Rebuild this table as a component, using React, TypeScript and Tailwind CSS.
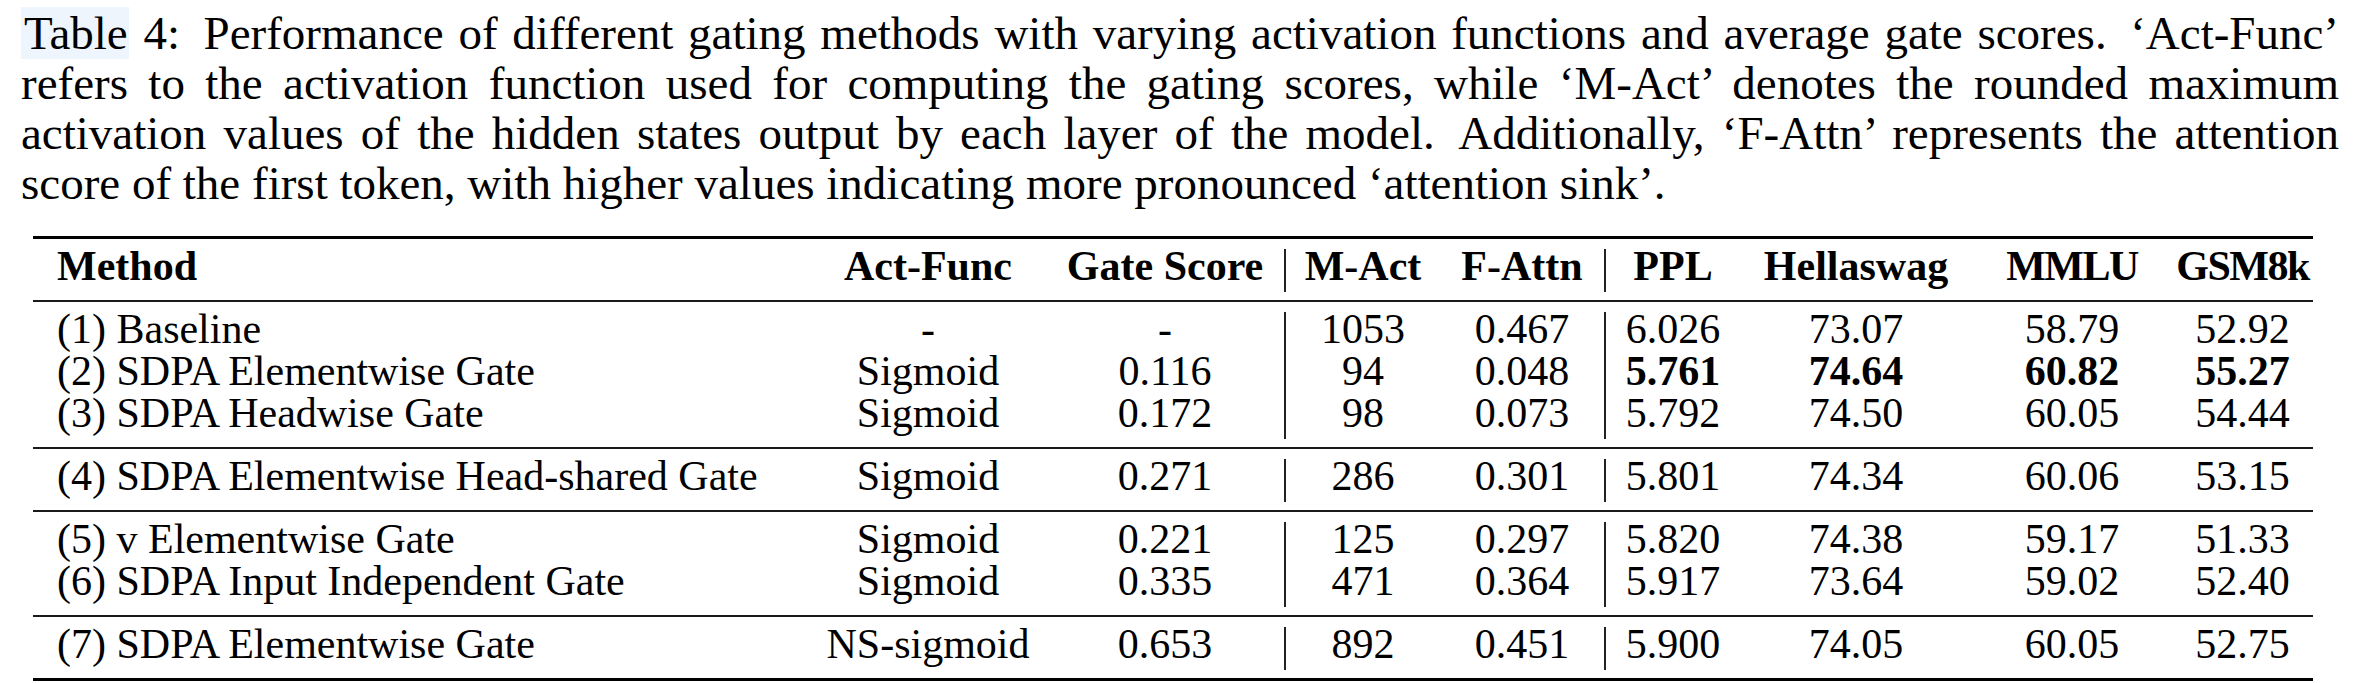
import React from "react";

type Row = {
  m: string;
  a: string;
  g: string;
  ma: string;
  fa: string;
  ppl: string;
  h: string;
  mm: string;
  gsm: string;
  bold?: boolean;
};

const groups: Row[][] = [
  [
    { m: "(1) Baseline", a: "-", g: "-", ma: "1053", fa: "0.467", ppl: "6.026", h: "73.07", mm: "58.79", gsm: "52.92" },
    { m: "(2) SDPA Elementwise Gate", a: "Sigmoid", g: "0.116", ma: "94", fa: "0.048", ppl: "5.761", h: "74.64", mm: "60.82", gsm: "55.27", bold: true },
    { m: "(3) SDPA Headwise Gate", a: "Sigmoid", g: "0.172", ma: "98", fa: "0.073", ppl: "5.792", h: "74.50", mm: "60.05", gsm: "54.44" },
  ],
  [
    { m: "(4) SDPA Elementwise Head-shared Gate", a: "Sigmoid", g: "0.271", ma: "286", fa: "0.301", ppl: "5.801", h: "74.34", mm: "60.06", gsm: "53.15" },
  ],
  [
    { m: "(5) v Elementwise Gate", a: "Sigmoid", g: "0.221", ma: "125", fa: "0.297", ppl: "5.820", h: "74.38", mm: "59.17", gsm: "51.33" },
    { m: "(6) SDPA Input Independent Gate", a: "Sigmoid", g: "0.335", ma: "471", fa: "0.364", ppl: "5.917", h: "73.64", mm: "59.02", gsm: "52.40" },
  ],
  [
    { m: "(7) SDPA Elementwise Gate", a: "NS-sigmoid", g: "0.653", ma: "892", fa: "0.451", ppl: "5.900", h: "74.05", mm: "60.05", gsm: "52.75" },
  ],
];

const gridCols =
  "grid grid-cols-[777px_236px_238px_2px_154px_164px_2px_134px_232px_200px_141px]";

function Cell({ lines, left, boldSet, tight }: { lines: string[]; left?: boolean; boldSet?: boolean[]; tight?: boolean }) {
  return (
    <div className={`flex flex-col pt-[6px] pb-[13px] ${left ? "items-start pl-[24px]" : "items-center"}`}>
      {lines.map((l, i) => (
        <div
          key={i}
          className={`h-[42px] leading-[42px] whitespace-nowrap ${boldSet && boldSet[i] ? "font-bold" : ""} ${tight ? "tracking-[-1.5px]" : ""}`}
        >
          {l}
        </div>
      ))}
    </div>
  );
}

function Bar() {
  return <div className="mt-[10px] mb-[8px] w-[2px] bg-[#222]" />;
}

function Group({ rows }: { rows: Row[] }) {
  const b = rows.map((r) => !!r.bold);
  return (
    <div className={gridCols}>
      <Cell left lines={rows.map((r) => r.m)} />
      <Cell lines={rows.map((r) => r.a)} />
      <Cell lines={rows.map((r) => r.g)} />
      <Bar />
      <Cell lines={rows.map((r) => r.ma)} />
      <Cell lines={rows.map((r) => r.fa)} />
      <Bar />
      <Cell lines={rows.map((r) => r.ppl)} boldSet={b} />
      <Cell lines={rows.map((r) => r.h)} boldSet={b} />
      <Cell lines={rows.map((r) => r.mm)} boldSet={b} />
      <Cell lines={rows.map((r) => r.gsm)} boldSet={b} />
    </div>
  );
}

export default function App() {
  return (
    <div className="w-[2367px] h-[683px] bg-white text-black font-['Liberation_Serif',serif] overflow-hidden">
      <div className="pl-[21px] pr-[28px] pt-[8px] text-[47px] leading-[50px]">
        <div className="text-justify [text-align-last:justify] whitespace-nowrap">
          <span className="bg-[#eef5fc] pl-[3px] pr-[1px]">Table</span> 4:{"\u2002"}Performance of different gating methods with varying activation functions and average gate scores.{"\u2002"}‘Act-Func’
        </div>
        <div className="text-justify [text-align-last:justify] whitespace-nowrap">
          refers to the activation function used for computing the gating scores, while ‘M-Act’ denotes the rounded maximum
        </div>
        <div className="text-justify [text-align-last:justify] whitespace-nowrap">
          activation values of the hidden states output by each layer of the model.{"\u2002"}Additionally, ‘F-Attn’ represents the attention
        </div>
        <div className="whitespace-nowrap">
          score of the first token, with higher values indicating more pronounced ‘attention sink’.
        </div>
      </div>

      <div className="ml-[33px] mt-[28px] w-[2280px] text-[42px]">
        <div className="h-[3px] bg-black" />
        <div className={gridCols}>
          <Cell left lines={["Method"]} boldSet={[true]} />
          <Cell lines={["Act-Func"]} boldSet={[true]} />
          <Cell lines={["Gate Score"]} boldSet={[true]} />
          <Bar />
          <Cell lines={["M-Act"]} boldSet={[true]} />
          <Cell lines={["F-Attn"]} boldSet={[true]} />
          <Bar />
          <Cell lines={["PPL"]} boldSet={[true]} />
          <Cell lines={["Hellaswag"]} boldSet={[true]} />
          <Cell lines={["MMLU"]} boldSet={[true]} tight />
          <Cell lines={["GSM8k"]} boldSet={[true]} tight />
        </div>
        {groups.map((g, i) => (
          <React.Fragment key={i}>
            <div className="h-[2px] bg-[#1a1a1a]" />
            <Group rows={g} />
          </React.Fragment>
        ))}
        <div className="h-[3px] bg-black" />
      </div>
    </div>
  );
}
